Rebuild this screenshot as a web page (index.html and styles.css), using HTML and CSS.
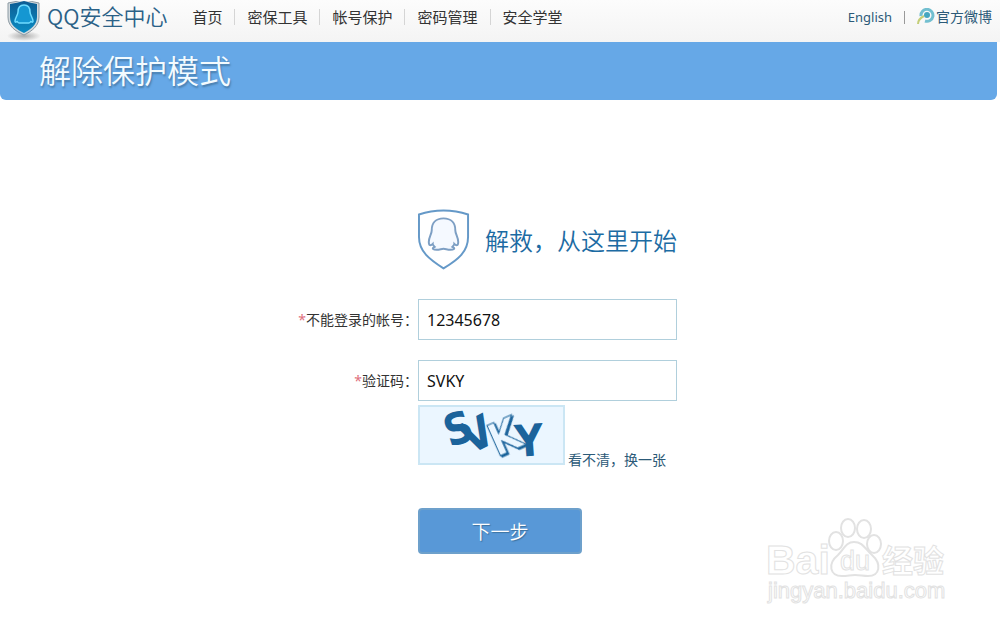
FILE: index.html
```html
<!DOCTYPE html>
<html lang="zh-CN">
<head>
    <meta charset="UTF-8">
    <meta name="viewport" content="width=device-width, initial-scale=1.0">
    <title>QQ安全中心</title>
    <link rel="stylesheet" href="styles.css">
</head>
<body>
    <header class="topbar">
        <a class="logo" href="#">
            <svg class="logo-icon" width="34" height="40" viewBox="0 0 34 40" aria-hidden="true">
                <defs>
                    <radialGradient id="shadow">
                        <stop offset="0" stop-color="#999" stop-opacity="0.8"/>
                        <stop offset="1" stop-color="#999" stop-opacity="0"/>
                    </radialGradient>
                    <linearGradient id="shield" x1="0" y1="0" x2="0" y2="1">
                        <stop offset="0" stop-color="#0d5c93"/>
                        <stop offset="1" stop-color="#0b8cc4"/>
                    </linearGradient>
                </defs>
                <ellipse cx="17" cy="35" rx="17" ry="5" fill="url(#shadow)"/>
                <path d="M1 2Q9 1 17 -2Q25 1 32 2V16C32 25 25 30 17 34C8 30 1 25 1 16Z" fill="#d3dade" stroke="#8d9aa3"/>
                <path d="M3 3Q10 2 17 0Q24 2 30 3V16C30 24 24 28 17 32C9 28 3 24 3 16Z" fill="url(#shield)"/>
                <path d="M17 4C13 4 11 7 11 11C11 14 8 17 8 20C8 22 10 21 10 20Q11 22 12 22H22Q23 22 24 20C24 21 26 22 26 20C26 17 23 14 23 11C23 7 21 4 17 4Z" fill="#1597d2" stroke="#6fdcff" stroke-width="1.5"/>
            </svg>
            <span>QQ安全中心</span>
        </a>
        <nav class="nav">
            <a href="#">首页</a>
            <a href="#">密保工具</a>
            <a href="#">帐号保护</a>
            <a href="#">密码管理</a>
            <a href="#">安全学堂</a>
        </nav>
        <div class="links">
            <a class="lang" href="#">English</a>
            <span class="divider"></span>
            <a class="weibo" href="#">
                <svg width="18" height="18" viewBox="0 0 18 18" aria-hidden="true">
                    <path d="M1 16C1 12 3 10 7 8" fill="none" stroke="#c4ce78" stroke-width="2"/>
                    <path d="M4 8A6 6 0 1 1 8 13" fill="none" stroke="#72bfd0" stroke-width="3"/>
                    <circle cx="10" cy="7" r="3" fill="#45a6c0"/>
                </svg>
                <span>官方微博</span>
            </a>
        </div>
    </header>

    <main>
        <h1 class="banner">解除保护模式</h1>

        <form class="rescue">
            <h2 class="title">
                <svg width="54" height="62" viewBox="0 0 54 62" aria-hidden="true">
                    <path d="M1 6Q13 2 26 2Q39 2 51 6V29C51 44 41 52 26 61C12 52 1 44 1 29Z" fill="#fff" stroke="#6599c8" stroke-width="2"/>
                    <path d="M26 10C18 10 14 15 14 22C14 26 11 29 11 34C11 38 13 38 15 36C15 37 16 38 17 39C13 41 16 42 19 42C22 42 24 41 26 41C28 41 30 42 33 42C36 42 39 41 35 39C36 38 37 37 37 36C39 38 41 38 41 34C41 29 38 26 38 22C38 15 34 10 26 10Z" fill="#f5f9ff" stroke="#7d9fc4" stroke-width="2"/>
                </svg>
                <span>解救，从这里开始</span>
            </h2>

            <label class="label" for="account"><span class="star">*</span>不能登录的帐号：</label>
            <input class="field" id="account" type="text" value="12345678">

            <label class="label" for="code"><span class="star">*</span>验证码：</label>
            <input class="field" id="code" type="text" value="SVKY">

            <div class="captcha">
                <svg class="captcha-img" viewBox="0 0 143 56" role="img" aria-label="验证码">
                    <g class="captcha-text">
                        <text transform="translate(43 36) rotate(-18)">S</text>
                        <text transform="translate(64 41) rotate(-27)">V</text>
                        <text transform="translate(110 49) rotate(-4)">Y</text>
                        <text class="outline" transform="translate(91 44) rotate(-24)">K</text>
                    </g>
                </svg>
                <a href="#">看不清，换一张</a>
            </div>

            <button class="next" type="submit">下一步</button>
        </form>
    </main>

    <svg class="watermark" width="190" height="92" viewBox="0 0 190 92" aria-hidden="true">
        <g class="paw">
            <ellipse cx="76" cy="24" rx="7" ry="9"/>
            <ellipse cx="88" cy="11" rx="7" ry="9"/>
            <ellipse cx="104" cy="12" rx="7" ry="9"/>
            <ellipse cx="114" cy="27" rx="7" ry="9"/>
            <path d="M94 25C86 25 84 32 78 38C67 47 70 59 82 59C88 59 90 58 95 58C100 58 103 59 108 59C120 59 122 47 112 38C105 32 103 25 94 25Z"/>
        </g>
        <text class="brand" x="6" y="57">Bai</text>
        <text class="du" x="80" y="53">du</text>
        <text class="jingyan" x="122" y="55">经验</text>
        <text class="site" x="8" y="81">jingyan.baidu.com</text>
    </svg>
</body>
</html>
```

FILE: styles.css
```css
* {
    box-sizing: border-box;
}

body {
    position: relative;
    min-height: 100vh;
    margin: 0;
    background-color: #fff;
    color: #333;
    font-family: "Noto Sans", "Noto Sans CJK SC", sans-serif;
    font-size: 14px;
}

a {
    color: #2c5a78;
    text-decoration: none;
}

/* top bar */
.topbar {
    display: flex;
    align-items: center;
    height: 42px;
    padding: 0 8px 8px 7px;
    background: linear-gradient(#fcfcfc, #f4f4f4);
}

.logo {
    display: flex;
    align-items: center;
    gap: 6px;
    color: #2a6187;
    font-family: "Noto Sans CJK SC", sans-serif;
    font-size: 22px;
    font-weight: 350;
    line-height: 30px;
}

.logo span {
    padding-bottom: 4px;
}

.logo-icon {
    margin-bottom: -8px;
}

.nav {
    display: flex;
    margin-left: 13px;
}

.nav a {
    padding: 0 12px;
    color: #333;
    font-size: 15px;
    line-height: 16px;
}

.nav a + a {
    border-left: 1px solid #d5d5d5;
}

.links {
    display: flex;
    align-items: center;
    gap: 12px;
    margin-left: auto;
    line-height: 18px;
}

.lang {
    font-size: 13px;
}

.divider {
    width: 1px;
    height: 13px;
    background-color: #999;
}

.weibo {
    display: flex;
    align-items: center;
    gap: 1px;
}

/* blue title */
.banner {
    margin: 0 3px 0 0;
    padding: 0 39px 4px;
    border-radius: 0 0 6px 6px;
    background-color: #66a8e7;
    color: #f3fbff;
    font-family: "Noto Sans CJK SC", sans-serif;
    font-size: 32px;
    font-weight: 350;
    line-height: 54px;
    text-shadow: 1px 2px 2px #477ba9;
}

/* form */
.rescue {
    display: grid;
    grid-template-columns: 41.8% 259px;
    align-items: center;
    padding-top: 108px;
}

.title {
    display: flex;
    grid-column: 2;
    align-items: center;
    gap: 14px;
    margin: 0 0 29px;
    color: #1c6ba3;
    font-family: "Noto Sans CJK SC", sans-serif;
    font-size: 24px;
    font-weight: 350;
    white-space: nowrap;
}

.label {
    margin-bottom: 22px;
    text-align: right;
}

.star {
    color: #e0707c;
}

.field {
    width: 100%;
    height: 41px;
    margin: 0 0 20px;
    padding: 0 8px;
    border: 1px solid #b0cfdc;
    background-color: #fff;
    color: #111;
    font-family: inherit;
    font-size: 16px;
}

.captcha {
    display: flex;
    grid-column: 2;
    align-items: flex-end;
    gap: 3px;
    margin-top: -16px;
}

.captcha a {
    line-height: 10px;
    white-space: nowrap;
}

.captcha-img {
    width: 147px;
    height: 60px;
    border: 2px solid #cbe6f4;
    background-color: #ebf6ff;
}

.captcha-text {
    fill: #1b639b;
    font-family: "Liberation Sans Narrow", "DejaVu Sans Condensed", "Open Sans", sans-serif;
    font-size: 44px;
    font-weight: bold;
    text-anchor: middle;
}

.captcha-text .outline {
    fill: #ebf6ff;
    stroke: #1b639b;
    filter: drop-shadow(1px 2px 0 #1b639b);
}

.next {
    grid-column: 2;
    width: 164px;
    height: 46px;
    margin: 43px 0 0;
    padding: 0 0 2px;
    border: 2px solid #6da0cb;
    border-radius: 4px;
    background-color: #5898d7;
    color: #fff;
    font-family: "Noto Sans CJK SC", sans-serif;
    font-size: 19px;
    font-weight: 350;
    text-shadow: 1px 1px 1px #3b719f;
    cursor: pointer;
}

/* watermark over the page corner */
.watermark {
    position: absolute;
    right: 50px;
    bottom: 17px;
    fill: #fff;
    stroke: #e2e2e2;
    font-family: "Liberation Sans", sans-serif;
}

.paw {
    stroke-width: 2px;
}

.brand {
    font-size: 41px;
    font-weight: bold;
}

.du {
    font-size: 27px;
}

.jingyan {
    font-family: "Noto Sans CJK SC", sans-serif;
    font-size: 31px;
    font-weight: bold;
}

.site {
    font-size: 22px;
}
```
